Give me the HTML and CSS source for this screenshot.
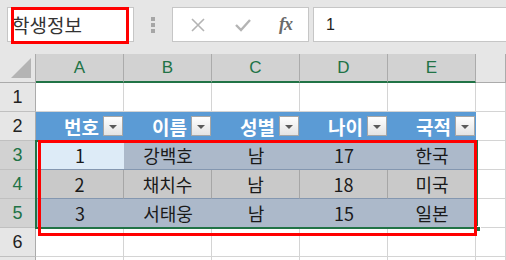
FILE: index.html
```html
<!DOCTYPE html>
<html lang="ko">
<head>
    <meta charset="UTF-8">
    <title>학생정보</title>
    <link rel="stylesheet" href="styles.css">
</head>
<body>
    <div id="excel">
        <div class="barra">
            <div class="nome">학생정보</div>
            <div class="pontos"><span></span><span></span><span></span></div>
            <div class="botoes">
                <svg width="16" height="16" viewBox="0 0 16 16"><path d="M2 2 L14 14 M14 2 L2 14" stroke="#b4b4b4" stroke-width="1.6" fill="none"/></svg>
                <svg width="18" height="16" viewBox="0 0 18 16"><path d="M2 8 L7 13 L16 3" stroke="#b4b4b4" stroke-width="2.4" fill="none"/></svg>
                <span class="fx">fx</span>
            </div>
            <div class="formula">1</div>
        </div>

        <div class="planilha">
            <div class="canto"><span></span></div>
            <div class="col sel">A</div>
            <div class="col sel">B</div>
            <div class="col sel">C</div>
            <div class="col sel">D</div>
            <div class="col sel">E</div>
            <div class="col"></div>

            <div class="lin">1</div>
            <div class="c"></div><div class="c"></div><div class="c"></div><div class="c"></div><div class="c"></div><div class="c"></div>

            <div class="lin">2</div>
            <div class="c cab"><b>번호</b><i></i></div>
            <div class="c cab"><b>이름</b><i></i></div>
            <div class="c cab"><b>성별</b><i></i></div>
            <div class="c cab"><b>나이</b><i></i></div>
            <div class="c cab"><b>국적</b><i></i></div>
            <div class="c"></div>

            <div class="lin sel">3</div>
            <div class="c d1 ativo">1</div>
            <div class="c d1">강백호</div>
            <div class="c d1">남</div>
            <div class="c d1">17</div>
            <div class="c d1">한국</div>
            <div class="c"></div>

            <div class="lin sel">4</div>
            <div class="c d2">2</div>
            <div class="c d2">채치수</div>
            <div class="c d2">남</div>
            <div class="c d2">18</div>
            <div class="c d2 ult">미국</div>
            <div class="c"></div>

            <div class="lin sel">5</div>
            <div class="c d1">3</div>
            <div class="c d1">서태웅</div>
            <div class="c d1">남</div>
            <div class="c d1">15</div>
            <div class="c d1">일본</div>
            <div class="c"></div>

            <div class="lin">6</div>
            <div class="c"></div><div class="c"></div><div class="c"></div><div class="c"></div><div class="c"></div><div class="c"></div>

            <div class="lin"></div>
            <div class="c"></div><div class="c"></div><div class="c"></div><div class="c"></div><div class="c"></div><div class="c"></div>
        </div>

        <div class="selecao"></div>
        <div class="alca"></div>
        <div class="marca marca-nome"></div>
        <div class="marca marca-tabela"></div>
    </div>
</body>
</html>
```

FILE: styles.css
```css
:root {
    --fundo: #e6e6e6;
    --verde: #217346;
    --azul: #5b9bd5;
    --linha1: #acb9ca;
    --linha2: #c9c9c9;
    --grade: #d4d4d4;
}

* {
    margin: 0px;
    padding: 0px;
    box-sizing: border-box;
}

body {
    width: 506px;
    height: 260px;
    overflow: hidden;
    background-color: #ffffff;
    font-family: "Noto Sans CJK KR", "Noto Sans", sans-serif;
}

#excel {
    position: relative;
    width: 506px;
    height: 260px;
    overflow: hidden;
}

/* barra de formula */
.barra {
    height: 54px;
    background-color: var(--fundo);
    display: flex;
    align-items: flex-start;
    padding: 7px 0px 0px 7px;
}

.nome {
    width: 127px;
    height: 35px;
    background-color: white;
    border: 1px solid #c6c6c6;
    font-size: 19px;
    line-height: 33px;
    padding-left: 4px;
    color: #333;
}

.pontos {
    width: 38px;
    height: 35px;
    display: flex;
    flex-direction: column;
    align-items: center;
    justify-content: center;
    gap: 2px;
}

.pontos span {
    width: 4px;
    height: 4px;
    background-color: #a6a6a6;
}

.botoes {
    width: 137px;
    height: 35px;
    background-color: white;
    border: 1px solid #c6c6c6;
    display: flex;
    align-items: center;
    justify-content: space-between;
    padding: 0px 16px 0px 17px;
}

.fx {
    font-family: "Liberation Serif", serif;
    font-style: italic;
    font-weight: bold;
    font-size: 18px;
    color: #6a6a6a;
    letter-spacing: -1px;
}

.formula {
    flex: 1;
    height: 35px;
    margin-left: 4px;
    background-color: white;
    border: 1px solid #c6c6c6;
    border-right: none;
    font-family: "Liberation Sans", sans-serif;
    font-size: 16px;
    line-height: 33px;
    padding-left: 12px;
    color: #222;
}

/* planilha */
.planilha {
    display: grid;
    grid-template-columns: 36px repeat(5, 88px) 1fr;
    grid-auto-rows: 29px;
    height: 206px;
    overflow: hidden;
}

.canto {
    background-color: var(--fundo);
    border-right: 1px solid #ababab;
    border-bottom: 1px solid #ababab;
    position: relative;
}

.canto span {
    position: absolute;
    right: 4px;
    bottom: 4px;
    width: 0;
    height: 0;
    border-left: 20px solid transparent;
    border-bottom: 20px solid #b4b4b4;
}

.col {
    background-color: var(--fundo);
    border-right: 1px solid #ababab;
    border-bottom: 1px solid #ababab;
    font-family: "Liberation Sans", sans-serif;
    font-size: 17px;
    text-align: center;
    line-height: 28px;
    color: #222;
}

.col.sel {
    background-color: #d2d2d2;
    color: var(--verde);
    border-bottom: 2px solid var(--verde);
}

.lin {
    background-color: var(--fundo);
    border-right: 1px solid #ababab;
    border-bottom: 1px solid #c0c0c0;
    font-family: "Liberation Sans", sans-serif;
    font-size: 18px;
    text-align: center;
    line-height: 29px;
    color: #222;
}

.lin.sel {
    background-color: #d2d2d2;
    color: var(--verde);
}

.c {
    border-right: 1px solid var(--grade);
    border-bottom: 1px solid var(--grade);
    display: flex;
    align-items: center;
    justify-content: center;
    font-size: 18px;
    color: #1a1a1a;
}

.cab {
    background-color: var(--azul);
    border-right: none;
    border-bottom: 1px solid #9dc3e6;
    justify-content: flex-end;
    gap: 4px;
    padding-right: 1px;
}

.cab b {
    color: white;
    font-size: 19px;
}

.cab i {
    width: 20px;
    height: 20px;
    border: 1px solid #a6a6a6;
    background: linear-gradient(#ffffff, #e4e4e4);
    position: relative;
}

.cab i::after {
    content: "";
    position: absolute;
    left: 5px;
    top: 8px;
    border-left: 4px solid transparent;
    border-right: 4px solid transparent;
    border-top: 4px solid #5a5a5a;
}

.d1 {
    background-color: var(--linha1);
    border-right: none;
    border-bottom: 1px solid #8497b0;
}

.d2 {
    background-color: var(--linha2);
    border-right: 1px solid #a6a6a6;
    border-bottom: 1px solid #8497b0;
}

.d2.ult {
    border-right: none;
}

.d1.ativo {
    background-color: #ddebf7;
}

/* selecao e marcacoes */
.selecao {
    position: absolute;
    left: 35px;
    top: 140px;
    width: 443px;
    height: 89px;
    border: 2px solid var(--verde);
}

.alca {
    position: absolute;
    left: 475px;
    top: 226px;
    width: 6px;
    height: 6px;
    background-color: var(--verde);
    border: 1px solid white;
}

.marca {
    position: absolute;
    border: 3px solid #ff0000;
}

.marca-nome {
    left: 11px;
    top: 7px;
    width: 118px;
    height: 37px;
}

.marca-tabela {
    left: 38px;
    top: 140px;
    width: 439px;
    height: 96px;
}
```
